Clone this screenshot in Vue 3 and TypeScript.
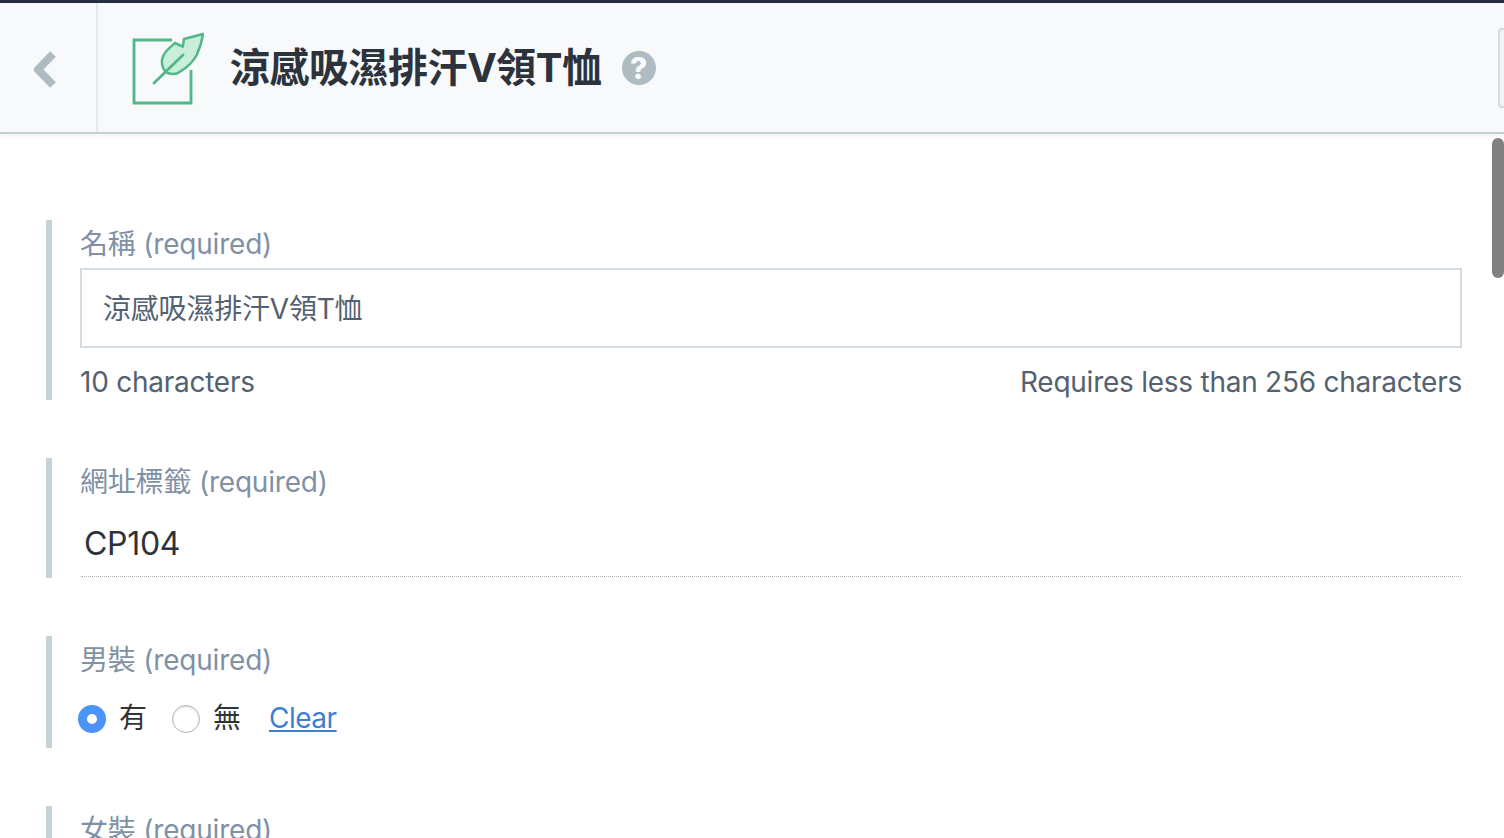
<script setup lang="ts">
const title = '涼感吸濕排汗V領T恤'
</script>

<template>
  <div class="page">
    <div class="top-stripe" />
    <header class="header">
      <div class="back">
        <svg class="chevron" width="28" height="40" viewBox="0 0 28 40">
          <path d="M24 4 L9 19.5 L24 35" fill="none" stroke="#aebbc1" stroke-width="8" stroke-linejoin="round" />
        </svg>
      </div>
      <div class="heading">
        <svg class="logo" width="74" height="74" viewBox="0 0 74 74" fill="none">
          <path d="M42 8 H4 V71 H61 V38" stroke="#52b788" stroke-width="2.800" />
          <path d="M73 2 L54 7 L52.700 14.700 L45 11 C 39 16 34 20 33 24.700 C 31.500 28 31.500 30 32.300 33 C 33 37 35 40 38.300 41.300 C 43 42.500 47 42 50 39.700 C 58 35 63 30 66.700 23 C 70 16 72 9 73 2 Z" fill="#c9eed9" stroke="#52b788" stroke-width="2.500" stroke-linejoin="round" />
          <path d="M24 51 L53 23" stroke="#52b788" stroke-width="2.800" stroke-linecap="round" />
        </svg>
        <h1 class="title">{{ title }}</h1>
        <span class="help">?</span>
      </div>
      <div class="edge-button" />
    </header>

    <main class="form">
      <section class="field name-field">
        <label class="label">名稱 (required)</label>
        <div class="text-input">{{ title }}</div>
        <div class="hints">
          <span>10 characters</span>
          <span>Requires less than 256 characters</span>
        </div>
      </section>

      <section class="field slug-field">
        <label class="label">網址標籤 (required)</label>
        <div class="slug">CP104</div>
      </section>

      <section class="field radio-field">
        <label class="label">男裝 (required)</label>
        <div class="radios">
          <span class="radio checked" />
          <span class="radio-text">有</span>
          <span class="radio" />
          <span class="radio-text">無</span>
          <a class="clear" href="#">Clear</a>
        </div>
      </section>

      <section class="field">
        <label class="label">女裝 (required)</label>
      </section>
    </main>

    <div class="scrollbar" />
  </div>
</template>

<style>
html,
body {
  margin: 0;
  height: 100%;
  overflow: hidden;
  background: #fff;
}
</style>

<style scoped>
.page {
  position: relative;
  height: 838px;
  overflow: hidden;
  font-family: Inter, "Noto Sans CJK TC", sans-serif;
  color: #2d333c;
}

.top-stripe {
  height: 3px;
  background: #263040;
}

.header {
  position: relative;
  display: flex;
  height: 129px;
  background: #f7f9fa;
  border-bottom: 2px solid #c3cfd5;
  box-shadow: 0 2px 4px rgba(0, 0, 0, 0.05);
}

.back {
  display: flex;
  align-items: center;
  justify-content: center;
  width: 98px;
  padding-right: 10px;
  box-sizing: border-box;
  border-right: 2px solid #e5ebed;
}

.chevron {
  margin-top: 4px;
}

.heading {
  display: flex;
  align-items: center;
  padding-left: 32px;
}

.logo {
  margin-top: 3px;
}

.title {
  margin: 0 0 0 26px;
  font-size: 40px;
  line-height: 50px;
  font-weight: 700;
  letter-spacing: -0.5px;
  color: #2d333c;
}

.help {
  display: flex;
  align-items: center;
  justify-content: center;
  width: 34px;
  height: 34px;
  margin-left: 20px;
  border-radius: 50%;
  background: #aebbc1;
  color: #f7f9fa;
  font-size: 30px;
  font-weight: 800;
}

.edge-button {
  position: absolute;
  top: 25px;
  left: 1498px;
  width: 20px;
  height: 76px;
  border: 2px solid #d3dce0;
  border-radius: 4px;
  background: #f0f3f4;
}

.form {
  display: flex;
  flex-direction: column;
  gap: 58px;
  padding: 86px 42px 0 46px;
}

.field {
  padding-left: 28px;
  border-left: 6px solid #c5d2d8;
}

.name-field {
  height: 180px;
  box-sizing: border-box;
}

.slug-field {
  height: 120px;
  box-sizing: border-box;
}

.radio-field {
  height: 112px;
  box-sizing: border-box;
}

.label {
  display: block;
  font-size: 28px;
  line-height: 48px;
  letter-spacing: -0.2px;
  color: #8091a5;
}

.text-input {
  height: 80px;
  box-sizing: border-box;
  padding: 0 21px;
  border: 2px solid #d3dce0;
  font-size: 28px;
  line-height: 78px;
  letter-spacing: -0.2px;
  color: #536171;
}

.hints {
  display: flex;
  justify-content: space-between;
  margin-top: 14px;
  font-size: 28px;
  line-height: 40px;
  letter-spacing: -0.25px;
  color: #536171;
}

.slug {
  height: 70px;
  margin: 0 1px;
  padding-left: 3px;
  font-size: 32px;
  line-height: 76px;
  letter-spacing: -0.3px;
  color: #2d333c;
  border-bottom: 1px dotted #aab3ba;
}

.radios {
  display: flex;
  align-items: center;
  margin-top: 18px;
  margin-left: -2px;
}

.radio {
  width: 28px;
  height: 28px;
  box-sizing: border-box;
  border-radius: 50%;
  border: 1px solid #b4b4b4;
  background: #fff;
  box-shadow: inset 0 1px 2px rgba(0, 0, 0, 0.15);
}

.radio.checked {
  border: 9px solid #4c94f7;
  box-shadow: none;
}

.radio-text {
  width: 44px;
  margin-left: 13px;
  margin-right: 9px;
  margin-top: -6px;
  font-size: 28px;
  color: #333;
}

.clear {
  margin-left: 3px;
  margin-top: -2px;
  font-size: 28px;
  letter-spacing: -0.5px;
  color: #3f7fd0;
  text-decoration: underline;
}

.scrollbar {
  position: absolute;
  top: 138px;
  left: 1492px;
  width: 12px;
  height: 140px;
  border-radius: 6px;
  background: #808080;
}
</style>
